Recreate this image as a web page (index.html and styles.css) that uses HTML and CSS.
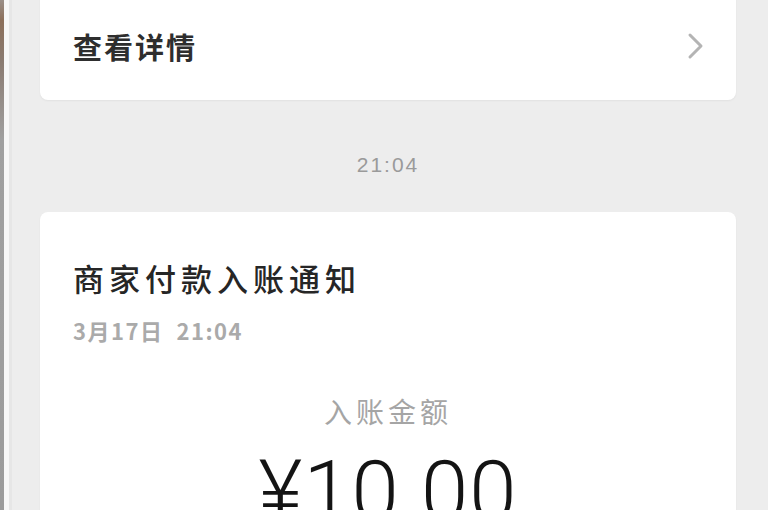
FILE: index.html
```html
<!DOCTYPE html>
<html lang="zh-CN">
<head>
<meta charset="utf-8">
<title>商家付款入账通知</title>
<link rel="stylesheet" href="styles.css">
</head>
<body>
<div class="page">
  <div class="edge-dark"></div>
  <div class="edge-light"></div>
  <div class="main">
    <div class="card card-top">
      <div class="detail-row">
        <span class="detail-text">查看详情</span>
        <svg class="chevron" width="20" height="28" viewBox="0 0 20 28">
          <path d="M4 3 L15 14 L4 25" fill="none" stroke="#b4b4b4" stroke-width="3" stroke-linecap="round" stroke-linejoin="round"/>
        </svg>
      </div>
    </div>
    <div class="time">21:04</div>
    <div class="card card-msg">
      <div class="msg-title">商家付款入账通知</div>
      <div class="msg-date">3月17日&nbsp;&nbsp;21:04</div>
      <div class="amount-label">入账金额</div>
      <div class="amount">¥10.00</div>
    </div>
  </div>
</div>
</body>
</html>
```
FILE: styles.css
```css
html, body {
  margin: 0;
  padding: 0;
  height: 100%;
  overflow: hidden;
  background: #ededed;
  font-family: "Noto Sans CJK SC", "Noto Sans", sans-serif;
}

.page {
  display: flex;
  height: 510px;
}

.edge-dark {
  width: 4px;
  flex: none;
  background: linear-gradient(#9a8f88 0px, #8c6f5a 20px, #8a7a70 60px, #a0a0a0 140px, #9b9b9b 510px);
}

.edge-light {
  width: 5px;
  flex: none;
  background: #f7f7f7;
  border-right: 3px solid #e6e6e6;
}

.main {
  flex: 1;
  padding: 0 32px 0 28px;
  display: flex;
  flex-direction: column;
}

.card {
  background: #ffffff;
  border-radius: 8px;
  box-shadow: 0 1px 2px rgba(0, 0, 0, 0.05);
}

.card-top {
  margin-top: -20px;
  padding-top: 20px;
}

.detail-row {
  height: 92px;
  padding: 0 30px 8px 33px;
  display: flex;
  align-items: center;
  justify-content: space-between;
}

.detail-text {
  font-size: 29px;
  font-weight: 700;
  color: #2e2e2e;
  letter-spacing: 2px;
}

.chevron {
  display: block;
}

.time {
  padding: 53px 0 35px;
  line-height: 24px;
  text-align: center;
  font-family: "Liberation Sans", sans-serif;
  font-size: 21px;
  letter-spacing: 2px;
  color: #9a9a9a;
}

.card-msg {
  flex: 1;
  padding: 48px 33px 0;
  border-bottom-left-radius: 0;
  border-bottom-right-radius: 0;
}

.msg-title {
  font-size: 31px;
  line-height: 36px;
  font-weight: 500;
  color: #262626;
  letter-spacing: 5px;
}

.msg-date {
  margin-top: 21px;
  font-size: 22px;
  line-height: 26px;
  font-weight: 700;
  color: #aaaaaa;
  letter-spacing: 1.5px;
}

.amount-label {
  margin-top: 50px;
  text-align: center;
  font-size: 28px;
  line-height: 36px;
  color: #a5a5a5;
  letter-spacing: 4px;
}

.amount {
  margin-top: 21px;
  text-align: center;
  font-family: "Roboto", "Liberation Sans", sans-serif;
  font-weight: 300;
  font-size: 85px;
  line-height: 85px;
  color: #141414;
  letter-spacing: 1px;
}
```
